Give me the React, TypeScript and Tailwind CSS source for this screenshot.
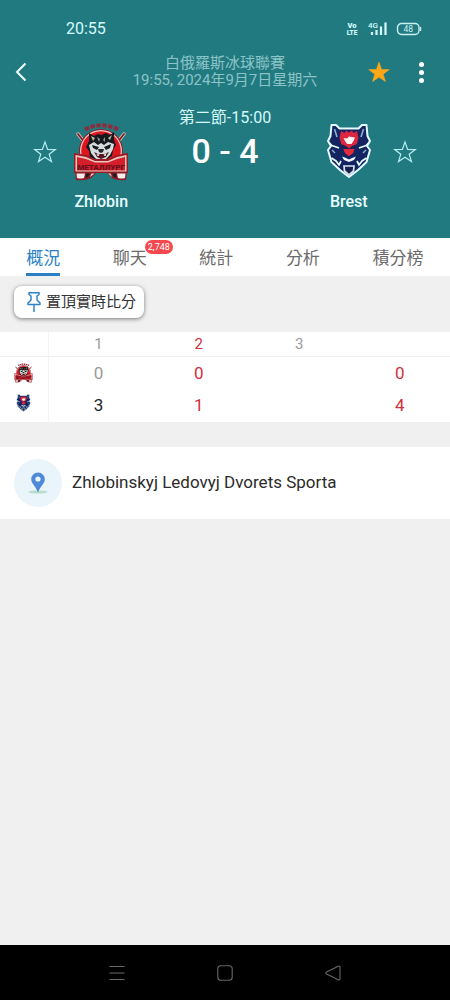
import React from "react";

type IconProps = { className?: string };

function WolfLogo({ className }: IconProps) {
  return (
    <svg viewBox="0 0 56 60" className={className} aria-hidden="true">
      <g fill="none" strokeLinecap="round">
        <path d="M5 12 L16 26 M51 12 L40 26" stroke="#e9c9bf" strokeWidth="3.4" />
        <path d="M5 12 L16 26 M51 12 L40 26" stroke="#7a2630" strokeWidth="2" />
      </g>
      <path
        d="M12 7.5 Q28 -1 45 7.5"
        fill="none"
        stroke="#8e2c3c"
        strokeWidth="4"
        strokeDasharray="4.4 1.6"
      />
      <circle cx="28" cy="29" r="22" fill="#8d1c26" />
      <circle cx="28" cy="29" r="21" fill="#f3cfc8" />
      <circle cx="28" cy="29" r="19.8" fill="#dc1620" />
      <path
        d="M16 11 L21 14 L25 12 L28 13 L33 11 L37 13 L41 10 L41 18 L43 23 L40 28 L39 34 L28 41 L17 35 L16 29 L13 25 L16 19 Z"
        fill="#17191c"
      />
      <path d="M18 14 L22 16 L20 19 Z M39 13 L35 16 L37 18 Z" fill="#b9b9a4" />
      <path d="M24 15 L27 17 L26 20 Z M32 15 L30 18 L32 20 Z" fill="#8f9a9c" />
      <path
        d="M16 23 L21 20 L25 23 L28 21 L31 23 L35 20 L41 22 L40 27 L37 33 L33 37 L28 40 L22 36 L18 31 Z"
        fill="#d8dedf"
      />
      <path d="M19 23 L26 25 L24 28 L20 26 Z M38 22 L31 25 L33 28 L37 26 Z" fill="#17191c" />
      <path d="M25 27 L31 27 L30 30 L28 31 L26 30 Z" fill="#26272b" />
      <path d="M21 30 L25 32 L31 32 L36 30 L33 35 L28 37 L24 35 Z" fill="#541820" />
      <path d="M24 32 L25 34 L26 32 M31 32 L32 34 L33 31" stroke="#fff" strokeWidth="0.9" fill="none" />
      <path d="M1 31 L13 33 L22 37 L35 37 L44 33 L55 31 V51 H1 Z" fill="#9a1a26" />
      <path d="M2.5 33 L13 35 L22 39 L35 39 L44 35 L53.5 33 V49.5 H2.5 Z" fill="#ecc9be" />
      <path d="M4 35 L13 37 L22 40.5 L35 40.5 L44 37 L52 35 V48.5 H4 Z" fill="#d21f2b" />
      <text
        x="28"
        y="48"
        textAnchor="middle"
        fontFamily="Roboto, sans-serif"
        fontSize="8"
        fontWeight="900"
        fill="#6b0f1a"
      >
        МЕТАЛЛУРГ
      </text>
      <path d="M2 50 H24 L18 56 Q13 59 3 58 Z M54 50 H33 L39 56 Q44 59 53 58 Z" fill="#8d1c26" />
      <path d="M3.5 51.5 H12 L11 56 Q7 57 4 56 Z M52.5 51.5 H44 L45 56 Q49 57 52 56 Z" fill="#f7eee9" />
      <path d="M13 51.5 H17 L15 55 L12.5 56 Z M43 51.5 H39 L41 55 L43.5 56 Z" fill="#1c1d22" />
      <path d="M18.5 51.5 H21.5 L17 55 Z M37.5 51.5 H35 L39 55 Z" fill="#ecd9cf" />
    </svg>
  );
}

function BearLogo({ className }: IconProps) {
  return (
    <svg viewBox="0 0 44 54" className={className} aria-hidden="true">
      <path
        d="M4.5 1 L9 1 L12.5 4.5 H31.5 L35 1 L39.5 1 L40.5 12 L43 17 L40 22 L43 26 L39.5 38 L31 46 L22 53 L13 46 L4.5 38 L1 26 L4 22 L1 17 L3.5 12 Z"
        fill="#132461"
        stroke="#e6fbff"
        strokeWidth="2"
        strokeLinejoin="round"
      />
      <path d="M7.5 5 L10 13 M36.5 5 L34 13" fill="none" stroke="#8fb1cf" strokeWidth="1.6" />
      <path
        d="M14 7 L17.5 9 L19 6.5 L22 8.5 L25 6.5 L26.5 9 L30 7 L31.5 14 L29.5 21 L26.5 24 H28 L26 29 L22 32 L18 29 L16 24 H17.5 L14.5 21 L12.5 14 Z"
        fill="#dc2540"
      />
      <path d="M16.5 14 L20 14.5 L22 12.5 L28 13.5 L26.5 17 L24.5 20 H20 L18 17 Z" fill="#fff5f3" />
      <path d="M14 20 L19 22 L22 24.5 L25 22 L30 20 L28 25 H16 Z" fill="#182050" />
      <path d="M16.5 25 L22 26.5 L27.5 25 L25.5 29.5 L22 32 L18.5 29.5 Z" fill="#e22b3b" />
      <path
        d="M1.5 18 L5 21.5 L12 24 M42.5 18 L39 21.5 L32 24"
        fill="none"
        stroke="#e6fbff"
        strokeWidth="1.6"
      />
      <path d="M5 26 L8 29 M39 26 L36 29" fill="none" stroke="#8fb1cf" strokeWidth="1.4" />
      <path
        d="M15 32.5 L19 34 L22 35.5 L25 34 L29 32.5 L27 36 L22 38 L17 36 Z"
        fill="#edfaff"
      />
      <path
        d="M4.5 34 L9 37 L12 41 L14 37 M39.5 34 L35 37 L32 41 L30 37"
        fill="none"
        stroke="#e6fbff"
        strokeWidth="1.7"
      />
      <path
        d="M17 42 H27 L26.5 47 L22 51 L17.5 47 Z"
        fill="#16204a"
        stroke="#d4e6f2"
        strokeWidth="1.7"
      />
    </svg>
  );
}

function Star({ className, filled }: IconProps & { filled?: boolean }) {
  return (
    <svg viewBox="0 0 24 24" className={className} aria-hidden="true">
      <path
        d="M12 2 L14.6 9.4 L22.3 9.6 L16.2 14.2 L18.5 21.6 L12 17.2 L5.5 21.6 L7.8 14.2 L1.7 9.6 L9.4 9.4 Z"
        fill={filled ? "#ffa817" : "none"}
        stroke={filled ? "#ffa817" : "#b5edf0"}
        strokeWidth={filled ? 0.5 : 1.2}
      />
    </svg>
  );
}

function StatusBar() {
  return (
    <div className="flex h-14 items-center justify-between pt-0.5 pr-7 pl-[66px] text-[#d5fafa]">
      <span className="text-base">20:55</span>
      <div className="flex items-center gap-2">
        <svg viewBox="0 0 12 14" className="h-3.5 w-3" aria-hidden="true">
          <g fontFamily="Roboto, sans-serif" fontSize="7.5" fontWeight="900" fill="#d5fafa" textAnchor="middle">
            <text x="6" y="6">Vo</text>
            <text x="6" y="13" fontSize="6.5">LTE</text>
          </g>
        </svg>
        <svg viewBox="0 0 22 16" className="h-4 w-[22px]" aria-hidden="true">
          <text x="2" y="7" fontFamily="Roboto, sans-serif" fontSize="8" fontWeight="500" fill="#d5fafa">
            4G
          </text>
          <path d="M6 14V11 M10.5 14V9 M15 14V5.5 M19.5 14V1.5" stroke="#d5fafa" strokeWidth="2.2" />
        </svg>
        <svg viewBox="0 0 26 14" className="h-3.5 w-[26px]" aria-hidden="true">
          <rect x="1.5" y="1.5" width="21.5" height="11" rx="4" fill="none" stroke="#c9eff0" strokeWidth="1.4" />
          <path d="M24.5 5 V9" stroke="#c9eff0" strokeWidth="1.4" />
          <text x="12.2" y="10" textAnchor="middle" fontFamily="Roboto, sans-serif" fontSize="8.5" fill="#c9eff0">
            48
          </text>
        </svg>
      </div>
    </div>
  );
}

function TopBar() {
  return (
    <div className="flex h-8 items-center justify-between pr-4">
      <button type="button" aria-label="返回" className="flex w-[88px] pl-3">
        <svg viewBox="0 0 20 24" className="h-6 w-5" aria-hidden="true">
          <path d="M13.5 3.5 L5 12 L13.5 20.5" fill="none" stroke="#f1ffff" strokeWidth="2" />
        </svg>
      </button>
      <div className="text-center text-[15px] leading-[17px] whitespace-nowrap text-[#8cc3c6]">
        <p>白俄羅斯冰球聯賽</p>
        <p>19:55, 2024年9月7日星期六</p>
      </div>
      <div className="flex w-[72px] items-center justify-end gap-6">
        <button type="button" aria-label="收藏比賽">
          <Star filled className="size-6" />
        </button>
        <button type="button" aria-label="更多" className="flex flex-col gap-[3px] p-1 pr-2.5">
          <i className="size-[5px] rounded-full bg-white" />
          <i className="size-[5px] rounded-full bg-white" />
          <i className="size-[5px] rounded-full bg-white" />
        </button>
      </div>
    </div>
  );
}

function Matchup() {
  return (
    <div className="grid grid-cols-[16fr_13fr_42fr_13fr_16fr] justify-items-center pt-4">
      <button type="button" aria-label="收藏 Zhlobin" className="mt-9 h-6 pl-[18px]">
        <Star className="size-6" />
      </button>
      <div className="flex flex-col items-center gap-2.5">
        <WolfLogo className="mt-[18px] h-[60px] w-14" />
        <span className="text-base leading-5 font-medium text-[#e9ffff]">Zhlobin</span>
      </div>
      <div className="flex flex-col items-center whitespace-nowrap">
        <p className="mt-1 text-base leading-5 text-[#d5f8f8]">第二節-15:00</p>
        <p className="text-[34px] leading-[46px] font-medium text-white">0 - 4</p>
      </div>
      <div className="flex flex-col items-center gap-2.5">
        <BearLogo className="mt-5 mb-1 h-[54px] w-11" />
        <span className="text-base leading-5 font-medium text-[#e9ffff]">Brest</span>
      </div>
      <button type="button" aria-label="收藏 Brest" className="mt-9 h-6 pr-[18px]">
        <Star className="size-6" />
      </button>
    </div>
  );
}

const tabs = ["概況", "聊天", "統計", "分析", "積分榜"];

function Tabs() {
  return (
    <nav className="grid h-[38px] grid-cols-[5fr_5fr_5fr_5fr_6fr] bg-white text-[17px] text-[#6b6b6b]">
      {tabs.map((tab, i) => (
        <a key={tab} href="#" className="flex justify-center">
          <span
            className={
              i === 0
                ? "relative h-[38px] border-b-[3px] border-[#2b7fc4] leading-10 text-[#2b80c5]"
                : "relative h-[38px] leading-10"
            }
          >
            {tab}
            {i === 1 && (
              <span className="absolute top-0.5 left-8 rounded-[7px] bg-[#f4494f] px-[3px] text-[9px] leading-[14px] text-white">
                2,748
              </span>
            )}
          </span>
        </a>
      ))}
    </nav>
  );
}

function PinBar() {
  return (
    <div className="h-14 px-3.5 pt-2.5">
      <button
        type="button"
        className="flex h-8 items-center gap-1 rounded-lg bg-white pr-2 pl-3 text-[15px] text-[#333] shadow-[0_1px_4px_rgba(0,0,0,0.5)]"
      >
        <svg viewBox="0 0 16 22" className="h-[22px] w-4" aria-hidden="true">
          <path
            d="M3 1.8 H13 V3.5 L11 5 V9 L14 12 V13.5 H2 V12 L5 9 V5 L3 3.5 Z M8 13.5 V21"
            fill="none"
            stroke="#2f83c5"
            strokeWidth="1.5"
            strokeLinejoin="round"
          />
        </svg>
        置頂實時比分
      </button>
    </div>
  );
}

function ScoreTable() {
  return (
    <table className="w-full table-fixed border-collapse bg-white text-center text-[17px]">
      <colgroup>
        <col className="w-12" />
        <col />
        <col />
        <col />
        <col />
      </colgroup>
      <thead>
        <tr className="h-6 border-b border-[#f0f0f0] text-[15px] leading-5 text-[#9b9b9b]">
          <td className="border-r border-[#f4f4f4] p-0" />
          <th scope="col" className="p-0 font-normal">1</th>
          <th scope="col" className="p-0 font-normal text-[#c9303e]">2</th>
          <th scope="col" className="p-0 font-normal">3</th>
          <td className="p-0" />
        </tr>
      </thead>
      <tbody className="text-[#d0303d]">
        <tr className="h-[34px]">
          <th scope="row" aria-label="Zhlobin" className="border-r border-[#f4f4f4] p-0">
            <WolfLogo className="mx-auto h-5 w-[19px]" />
          </th>
          <td className="p-0 text-[#999]">0</td>
          <td className="p-0">0</td>
          <td className="p-0" />
          <td className="p-0">0</td>
        </tr>
        <tr className="h-8">
          <th scope="row" aria-label="Brest" className="border-r border-[#f4f4f4] p-0 pb-1.5">
            <BearLogo className="mx-auto h-[18px] w-[15px]" />
          </th>
          <td className="p-0 text-[#222]">3</td>
          <td className="p-0">1</td>
          <td className="p-0" />
          <td className="p-0">4</td>
        </tr>
      </tbody>
    </table>
  );
}

function Venue() {
  return (
    <section className="mt-[25px] flex h-[72px] items-center gap-2.5 bg-white px-3.5 text-[17px] text-[#2b2b2b]">
      <div className="flex size-12 items-center justify-center rounded-full bg-[#eaf4fb]">
        <svg viewBox="0 0 20 24" className="h-6 w-5" aria-hidden="true">
          <ellipse cx="10" cy="21" rx="9.5" ry="1.6" fill="#b9dccb" />
          <path
            d="M10 1.5 A6.8 6.8 0 0 1 16.8 8.3 C16.8 12.5 12.5 15 10 21.5 C7.5 15 3.2 12.5 3.2 8.3 A6.8 6.8 0 0 1 10 1.5 Z"
            fill="#4f8ad8"
          />
          <circle cx="10" cy="8" r="2.6" fill="#eef6fd" />
        </svg>
      </div>
      <p>Zhlobinskyj Ledovyj Dvorets Sporta</p>
    </section>
  );
}

function SystemNav() {
  return (
    <footer className="flex h-[55px] items-center justify-center gap-[88px] bg-black">
      <button type="button" aria-label="最近使用">
        <svg viewBox="0 0 20 20" className="size-5" aria-hidden="true">
          <path d="M2.5 3.5 H17.5 M2.5 10 H17.5 M2.5 16.5 H17.5" stroke="#686868" strokeWidth="1.1" />
        </svg>
      </button>
      <button type="button" aria-label="主畫面">
        <svg viewBox="0 0 20 20" className="size-5" aria-hidden="true">
          <rect x="2.8" y="2.8" width="14.4" height="14.4" rx="3" fill="none" stroke="#686868" strokeWidth="1.1" />
        </svg>
      </button>
      <button type="button" aria-label="返回上一頁">
        <svg viewBox="0 0 20 20" className="size-5" aria-hidden="true">
          <path
            d="M15.2 3.2 L3.6 9 Q2 10 3.6 11 L15.2 16.8 Q17 17.2 17 15.6 V4.4 Q17 2.8 15.2 3.2 Z"
            fill="none"
            stroke="#686868"
            strokeWidth="1.1"
          />
        </svg>
      </button>
    </footer>
  );
}

export default function App() {
  return (
    <div className="flex min-h-screen flex-col bg-[#f0f0f0] font-[Roboto,'Noto_Sans_CJK_TC',sans-serif]">
      <header className="bg-[#227a81] pb-[26px]">
        <StatusBar />
        <TopBar />
        <Matchup />
      </header>
      <Tabs />
      <main className="flex-1">
        <PinBar />
        <ScoreTable />
        <Venue />
      </main>
      <SystemNav />
    </div>
  );
}
